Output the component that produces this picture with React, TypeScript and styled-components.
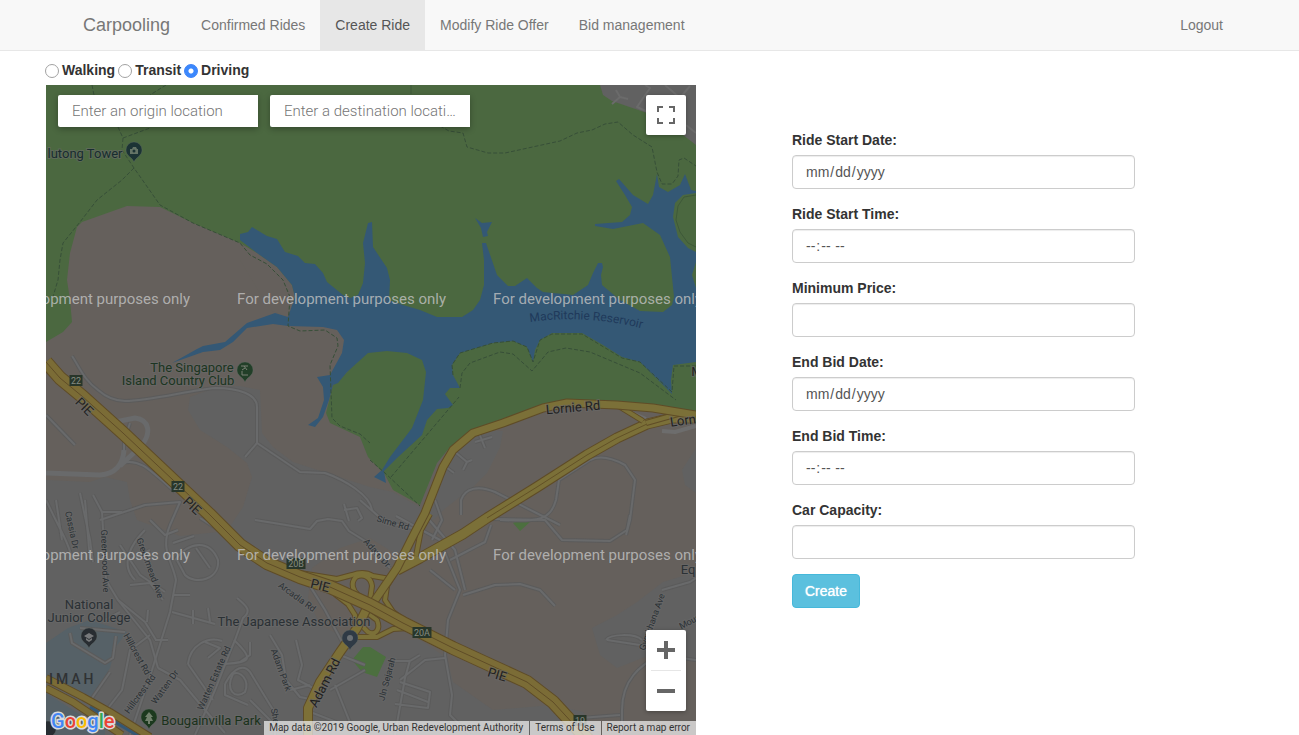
import React from "react";
import styled, { createGlobalStyle } from "styled-components";

const GlobalStyle = createGlobalStyle`
  *, *::before, *::after { box-sizing: border-box; }
  body {
    margin: 0;
    background: #fff;
    color: #333;
    font: 14px/20px "Liberation Sans", Arial, sans-serif;
  }
  input, button { font-family: inherit; }
`;

const Page = styled.div`
  min-height: 100vh;
  display: flex;
  flex-direction: column;
`;

const Navbar = styled.nav`
  padding-left: 7px;
  background: #f8f8f8;
  border-bottom: 1px solid #e7e7e7;
`;

const NavInner = styled.div`
  max-width: 1170px;
  margin: 0 auto;
  display: flex;
`;

const NavLink = styled.a<{ $active?: boolean }>`
  padding: 15px;
  color: ${(p) => (p.$active ? "#555" : "#777")};
  background: ${(p) => (p.$active ? "#e7e7e7" : "transparent")};
  text-decoration: none;
  white-space: nowrap;
`;

const Brand = styled(NavLink)`
  padding-right: 16px;
  font-size: 18px;
`;

const NavEnd = styled.div`
  display: flex;
  margin-left: auto;
`;

const ModeBar = styled.div`
  display: flex;
  align-items: center;
  gap: 3px;
  padding: 9px 0 5px 45px;
`;

const ModeLabel = styled.label`
  display: flex;
  align-items: center;
  gap: 3px;
  font-weight: 700;
`;

const Radio = styled.input`
  appearance: none;
  width: 14px;
  height: 14px;
  margin: 2px 0 0;
  border: 1px solid #a2a2a2;
  border-radius: 50%;
  background: #fff;
  &:checked {
    border-color: #3b82f7;
    background: radial-gradient(circle, #fff 0 2px, #3b88fd 3px);
  }
`;

const Main = styled.main`
  flex: 1;
  display: grid;
  grid-template-columns: 650fr 343fr;
  column-gap: 96px;
  padding: 0 164px 0 46px;
`;

const MapPanel = styled.section`
  position: relative;
  min-height: 650px;
  overflow: hidden;
  background: #616161;
`;

const MapSvg = styled.svg`
  position: absolute;
  inset: 0;
  width: 100%;
  height: 100%;
  font-family: Roboto, sans-serif;
`;

const SearchBar = styled.div`
  position: absolute;
  top: 10px;
  left: 12px;
  display: flex;
  gap: 12px;
`;

const SearchInput = styled.input`
  width: 200px;
  height: 32px;
  padding: 0 13px 0 14px;
  border: 0;
  border-radius: 2px 0 0 2px;
  box-shadow: 0 2px 6px rgba(0, 0, 0, 0.3);
  background: #fff;
  font: 300 15px Roboto, sans-serif;
  text-overflow: ellipsis;
  &::placeholder { color: #757575; opacity: 1; }
`;

const ControlCard = styled.div`
  position: absolute;
  right: 10px;
  display: flex;
  flex-direction: column;
  align-items: center;
  background: #fff;
  border-radius: 2px;
  box-shadow: 0 1px 4px rgba(0, 0, 0, 0.3);
`;

const TopControl = styled(ControlCard)`
  top: 10px;
`;

const ZoomControl = styled(ControlCard)`
  bottom: 24px;
`;

const ControlButton = styled.button`
  display: flex;
  align-items: center;
  justify-content: center;
  width: 40px;
  height: 40px;
  padding: 0;
  border: 0;
  background: none;
  color: #666;
`;

const ControlDivider = styled.div`
  width: 30px;
  height: 1px;
  background: #e6e6e6;
`;

const Attribution = styled.footer`
  position: absolute;
  right: 0;
  bottom: 0;
  display: flex;
  font: 10px/14px Roboto, sans-serif;
  color: #333;
`;

const Credit = styled.span`
  padding: 0 6px 0 5px;
  background: rgba(245, 245, 245, 0.7);
  white-space: nowrap;
  & + & { margin-left: 1px; }
  a { color: inherit; text-decoration: none; }
`;

const RideForm = styled.form`
  padding-top: 45px;
`;

const Field = styled.div`
  margin-bottom: 15px;
`;

const FieldLabel = styled.label`
  display: block;
  margin-bottom: 5px;
  font-weight: 700;
`;

const FieldInput = styled.input`
  display: block;
  width: 100%;
  height: 34px;
  padding: 6px 12px;
  border: 1px solid #ccc;
  border-radius: 4px;
  background: #fff;
  box-shadow: inset 0 1px 1px rgba(0, 0, 0, 0.075);
  color: #555;
  font-size: 14px;
  line-height: 20px;
  &::-webkit-calendar-picker-indicator { display: none; }
`;

const CreateButton = styled.button`
  padding: 6px 12px;
  border: 1px solid #46b8da;
  border-radius: 4px;
  background: #5bc0de;
  color: #fff;
  font-size: 14px;
  line-height: 20px;
  text-shadow: 0 0 1px #fff;
`;

const Watermark = styled.text`
  font-size: 15px;
  fill: #c3c3c3;
  fill-opacity: 0.8;
`;

const PlaceLabel = styled.text<{ $tone?: string; $size?: number }>`
  font-size: ${(p) => p.$size ?? 13}px;
  fill: ${(p) => p.$tone ?? "#2b3135"};
  stroke: #6a6a6a;
  stroke-opacity: 0.6;
  stroke-width: 2px;
  paint-order: stroke;
  text-anchor: middle;
`;

const Highway = ({ d, width = 7, color = "#7b6c36" }: { d: string; width?: number; color?: string }) => (
  <g fill="none" strokeLinejoin="round">
    <path d={d} stroke="#5f4c27" strokeWidth={width + 2} />
    <path d={d} stroke={color} strokeWidth={width} />
  </g>
);

const Shield = ({ x, y, text }: { x: number; y: number; text: string }) => {
  const w = text.length > 2 ? 19 : 13;
  return (
    <g>
      <rect x={x - w / 2} y={y - 6} width={w} height={11} fill="#28362a" />
      <text x={x} y={y + 3} fontSize="9" textAnchor="middle" fill="#858b80">{text}</text>
    </g>
  );
};

const Pin = ({ x, y, color, children }: { x: number; y: number; color: string; children?: React.ReactNode }) => (
  <g transform={`translate(${x} ${y})`}>
    <path d="M0 11 C-2 6 -8 5 -8 -1 A8 8 0 1 1 8 -1 C8 5 2 6 0 11Z" fill={color} stroke="#65706a" strokeOpacity=".35" />
    {children}
  </g>
);

const localRoads = [
  "M72 356C80 368 84 380 98 390C106 397 115 401 125 401C150 401 190 390 215 388C238 388 258 394 257 408L257 443L245 457",
  "M257 443L300 472L325 473C345 480 370 495 372 510",
  "M46 473L100 475C115 474 123 465 124 453L124 440M122 463C140 458 150 470 175 492",
  "M115 422L135 418C150 420 151 433 142 445L120 466M130 423L127 432C128 440 140 444 140 447",
  "M46 500C60 530 70 545 72 560M56 500L62 540M80 493L90 540L93 562",
  "M93 495L102 512L122 512M102 512L106 580L118 600L150 640L158 668M85 500L90 560",
  "M100 520L145 505L180 502L170 525C160 550 172 560 176 580L170 612L152 670L130 735",
  "M172 612L215 624M193 624V610M210 622L208 608M173 543L194 536M174 595L190 595",
  "M120 545L140 575L165 592M128 560L150 550M130 585L150 583L163 600",
  "M150 635L130 650L122 690L95 725M158 668L180 680L205 710L225 733",
  "M118 600L145 622L156 640M120 612L105 620M147 622L148 610M155 640L168 640",
  "M175 560C190 540 210 540 218 560C220 580 195 585 185 575L177 560M196 548L210 568",
  "M150 520L165 535L178 530M145 530C130 545 120 565 135 580",
  "M188 664C190 645 208 636 222 641M205 642L220 648L208 658M188 664L213 700",
  "M237 598C245 605 253 610 243 618L235 640L230 652L215 690L195 735",
  "M234 640C255 660 250 662 225 664M240 662L250 655V642",
  "M270 635L282 655L286 680L300 697L315 700M290 690L310 685",
  "M225 684C235 665 245 665 250 672L275 713V735M225 684V695L248 705",
  "M233 674C225 690 235 700 245 692C250 680 240 670 233 674",
  "M200 518L250 550L310 586L325 610L342 642",
  "M255 520L280 524L310 529L317 521L328 519L342 521L349 531L365 541L390 568M349 521L344 504M344 510L357 508L362 518L358 521M360 500L385 522L412 528",
  "M340 655L365 665M330 690L365 670M335 685L355 735M305 710L370 735",
  "M296 640L302 665L298 680L317 690M250 700L285 735",
  "M396 516L440 540L460 590L448 620L445 655L452 695L450 715L470 735",
  "M463 595L495 585L520 584L540 590L555 606",
  "M425 515L455 550L465 590M430 570L455 590",
  "M435 500L442 520L432 540M450 560L485 542L491 525M490 519L545 520L562 540L610 541L627 530L630 515",
  "M461 515V500C465 488 478 485 495 492L560 525M559 480L556 500C550 520 540 522 500 520",
  "M559 480L590 460C600 455 612 458 625 465L635 480L630 520L626 535",
  "M455 452L467 462L463 470M467 462L472 460M479 433L485 448M475 442L492 437M446 467L454 473",
  "M410 660L405 678L395 735M395 661H410L420 655M400 682L430 692L428 708L395 704M400 680L425 660L445 658M397 690L428 702",
  "M607 640L640 645M606 640C610 634 635 633 642 640M662 590L690 582L696 578",
  "M696 660L660 655C640 665 622 680 622 710V735M580 718L620 715",
  "M46 415L75 445M70 633L72 643L105 663L113 658L116 636M110 672L92 698M80 628L125 632",
];

const areaGray = [
  "M600 85L603 95L612 101L647 113L683 135L696 145V85Z",
  "M46 480L90 482L105 477L127 482L130 500L137 520L180 536L227 531L243 507L252 477L247 463L227 447L200 430L188 410L190 397L217 387L240 386L260 390L262 433L273 447L293 462L370 487L393 492L425 510L405 560L370 538L340 548L312 568L308 598L320 625L350 640L420 640L447 658L453 682L493 710L553 705L583 712L600 735H46Z",
  "M470 430L503 431L500 447L487 473L473 487L447 507L433 520L425 512L440 468L452 448Z",
  "M592 628L617 615L637 602L663 582L696 572V660L650 655L617 668L600 655Z",
  "M696 448L682 470L685 485L696 493Z",
];

const waterPath =
  "M252 227L267 236L277 239L285 252L298 256L305 263L315 264L323 273L327 282L343 295L350 298L358 295L363 283L365 263L363 243L368 223L372 222L373 247L387 268L390 280L389 300L403 305L420 310L437 317L462 317L473 310L480 300L484 285V260L482 243L486 243L497 275L508 286H515L527 278L537 288L543 292L573 295L588 285L593 273L598 263L602 263L603 267L601 275L602 285L620 300L640 311L663 312L672 305L674 297L670 257L660 235L643 223L613 229L595 226L595 224L622 222L630 215L632 207L625 195L616 181L619 179L633 195L648 204L653 195L657 174L659 187L668 192L680 185L685 174L691 190L696 191V193L683 195L675 203L673 217L678 237L688 248L696 252V262L692 275L696 288V362L673 365L671 380L672 394L640 362L622 357L603 345L582 333H552L540 340L535 350L533 362L527 347L513 341L493 343L460 353L452 365L453 375L460 388H450L445 394L453 405L448 408L437 409L427 420L422 435L397 458L384 471L386 483L374 477L382 470L390 457L412 428L423 400L426 372L422 360L407 353L387 351L368 353L347 372L338 383L333 385L329 400L323 417L315 427L308 425L318 418L324 400L323 387L317 377L330 375L342 353L344 340L337 330L323 327L288 326L273 324L247 328L233 342L220 350L203 352L172 363L197 349L203 346L225 342L247 323L275 313L288 317L295 297L292 285L277 267L257 253L240 240V234L248 232Z";

const trails =
  "M92 85L95 100M166 85L150 95L118 127M118 127L123 138L150 128M123 138L122 150L134 168L160 205L193 223L240 243L250 255L267 264L283 280L290 297L288 326L300 331L325 330L337 338L338 346L330 365L332 418L340 426L360 434L370 443M134 168L122 180L97 200L80 222L63 243L60 260L58 280L52 300M440 126L449 131L463 133L467 147L488 153L505 153L560 141L577 133L592 130L605 124L618 122L633 135L652 147L657 172L662 184L672 184L678 176L679 160L684 158L696 166M453 375L452 365L460 353L493 343L513 341L527 347L533 362L540 340L552 334L582 334L622 358L640 362L672 392L674 366L696 366M460 388L462 373L470 363L500 352L513 354L532 371L548 352L566 348L590 352L640 373L676 400M370 460L385 473L420 506M391 477L459 397";

const freeways =
  "M46 362L60 378L83 397L123 433L173 480L209 514L240 545L267 563L300 577L330 587L370 605L403 623L453 648L490 665L527 682L553 702L577 728L590 742";

const ReservoirMap = () => (
  <MapSvg viewBox="46 85 650 650" preserveAspectRatio="xMidYMid slice" role="img" aria-label="Map of MacRitchie Reservoir">
    <rect x="-600" y="-600" width="2000" height="2000" fill="#65605c" />
    {areaGray.map((d) => <path key={d} d={d} fill="#616161" />)}
    <path d="M46 85H600L603 95L612 101L647 113L683 135L696 145V330H500L300 310L240 243L193 223L160 207L127 206L82 222L77 227L70 253L67 280L70 300L72 322L63 332L46 342Z" fill="#4b6840" />
    <path d="M240 243L257 253L277 267L292 285L295 297L288 317L270 310L240 260Z" fill="#65605c" />
    <path d="M368 345L500 330L600 320L696 340V412L637 403L570 402L547 407L503 422L470 433L450 447L437 463L420 505L393 490L385 475L368 457L360 437L330 423L326 413L333 385L347 372Z" fill="#4b6840" />
    <path d="M46 643L68 628L90 620L127 632L115 648L110 668L92 698L46 676ZM46 693L105 730V735H46Z" fill="#566167" />
    <path d="M513 523L521 519L530 522L520 531ZM352 660L363 647H370L386 657L377 677L362 672Z" fill="#4c6f3f" />
    <path d={waterPath} fill="#345875" />
    <path d="M475 218L482 223L492 222L487 232L488 236L483 237L481 228Z" fill="#345875" />
    <path d={trails} fill="none" stroke="#374f38" strokeDasharray="4 2" />
    <path d="M696 195L684 197L678 206L676 220L680 232L688 243L696 247M411 85V94" fill="none" stroke="#3e5939" />

    <g fill="none" strokeLinejoin="round">
      {localRoads.map((d) => <path key={d} d={d} stroke="#5b5b5b" strokeWidth="4" />)}
      {localRoads.map((d) => <path key={d} d={d} stroke="#696a6b" strokeWidth="2" />)}
      <path d="M612 104L620 97L616 90M620 97L628 99M648 112L637 107L650 88L645 85M665 85L680 98L690 86M686 125L696 133" stroke="#6b6b6b" strokeWidth="2" />
      <path d="M46 473L100 475C115 474 123 465 124 450M115 422L135 418C150 420 151 433 142 445L120 466" stroke="#696a6b" strokeWidth="5" />
      <path d="M618 407L646 419M662 431L675 432L696 426" stroke="#6d6d6d" strokeWidth="4" />
    </g>

    <path d="M90 707L140 737" fill="none" stroke="#345875" strokeWidth="3" />
    <Highway d="M46 678L83 697L110 712L150 737" width={6} />
    <Highway d="M46 688L73 702L122 735" width={6} />
    <Highway d="M280 568L300 573L337 579L352 575C360 572 368 573 373 576L390 579M370 600L372 586C371 577 363 573 356 577C350 583 353 591 358 595L370 602" width={4} color="#7b7038" />
    <Highway d="M397 570L387 586L385 600L393 612L413 627M335 594L348 604L355 615V626M366 612L377 620C381 630 375 636 368 632L360 624M352 637H377L393 629L408 628" width={4} color="#7b7038" />
    <Highway d="M366 610L357 628L340 652L320 682L308 708V740" width={8} color="#7d7037" />
    <Highway d="M696 418L672 418L647 424L617 438L587 455L537 487L487 518L463 534L420 558L397 570" width={9} color="#7b7038" />
    <Highway d="M430 514L421 530L416 556M617 405L643 421M646 423L678 414H696" width={4} color="#7b7038" />
    <Highway d="M373 603L397 568L411 540L425 513L443 467L453 450L473 433L503 423L543 408L567 403L617 405L653 408L696 415" width={7} color="#7b7038" />
    <Highway d={freeways} width={12} />
    <path d={freeways} fill="none" stroke="#5f4c27" />
    <path d="M487 518L537 487L587 455L617 438L647 424" fill="none" stroke="#625126" />

    <Shield x={76} y={381} text="22" />
    <Shield x={178} y={487} text="22" />
    <Shield x={296} y={564} text="20B" />
    <Shield x={422} y={633} text="20A" />
    <Shield x={580} y={721} text="19" />

    <Pin x={134} y={151} color="#1c3334">
      <path d="M-4 -2H-2L-1 -4H2L3 -2H4V3H-4Z" fill="#657466" />
      <circle cy="0" r="1.5" fill="#1c3334" />
    </Pin>
    <Pin x={245} y={371} color="#223f28">
      <path d="M-4 -5H3M-1 -5L2 -1M-3 -1L0 -3M-3 0V4H3" fill="none" stroke="#7a8175" />
    </Pin>
    <Pin x={89} y={637} color="#282d32">
      <path d="M-5 -1L0 -4L5 -1L0 2ZM-3 1V3L0 5L3 3V1L0 3Z" fill="#77797b" />
    </Pin>
    <Pin x={350} y={639} color="#2f3a45"><circle cy="-1" r="3" fill="#6a6f73" /></Pin>
    <Pin x={149} y={718} color="#1c391e">
      <path d="M0 -6L4 -1H2L4 3H1V6H-1V3H-4L-2 -1H-4Z" fill="#71806c" />
    </Pin>
    <Pin x={48} y={730} color="#282d32" />

    <PlaceLabel x={85} y={158} $tone="#182d2f">lutong Tower</PlaceLabel>
    <PlaceLabel x={192} y={372} $tone="#1c3521">The Singapore</PlaceLabel>
    <PlaceLabel x={178} y={385} $tone="#1c3521">Island Country Club</PlaceLabel>
    <PlaceLabel x={89} y={609}>National</PlaceLabel>
    <PlaceLabel x={89} y={622}>Junior College</PlaceLabel>
    <PlaceLabel x={294} y={626}>The Japanese Association</PlaceLabel>
    <PlaceLabel x={211} y={725} $tone="#1b321c">Bougainvilla Park</PlaceLabel>
    <text x="49" y="684" fontSize="14" fontWeight="500" letterSpacing="3" fill="#303234">IMAH</text>
    <PlaceLabel x={688} y={574}>Eq</PlaceLabel>
    <PlaceLabel x={697} y={376} $tone="#222">M</PlaceLabel>
    <PlaceLabel transform="translate(84 407) rotate(45)" y={4} $tone="#222">PIE</PlaceLabel>
    <PlaceLabel transform="translate(192 506) rotate(43)" y={4} $tone="#222">PIE</PlaceLabel>
    <PlaceLabel transform="translate(320 586) rotate(14)" y={4} $tone="#222">PIE</PlaceLabel>
    <PlaceLabel transform="translate(497 675) rotate(17)" y={4} $tone="#222">PIE</PlaceLabel>
    <PlaceLabel transform="translate(573 408) rotate(-5)" y={4} $tone="#1f1f1f">Lornie Rd</PlaceLabel>
    <PlaceLabel transform="translate(683 421) rotate(-8)" y={4} $tone="#1f1f1f">Lorn</PlaceLabel>
    <PlaceLabel transform="translate(325 683) rotate(-63)" y={4} $tone="#1f1f1f">Adam Rd</PlaceLabel>
    <PlaceLabel transform="translate(393 523) rotate(16)" y={3} $size={9}>Sime Rd</PlaceLabel>
    <PlaceLabel transform="translate(377 553) rotate(48)" y={3} $size={9}>Adam Dr</PlaceLabel>
    <PlaceLabel transform="translate(297 597) rotate(36)" y={3} $size={9}>Arcadia Rd</PlaceLabel>
    <PlaceLabel transform="translate(72 530) rotate(78)" y={3} $size={9}>Cassia Dr</PlaceLabel>
    <PlaceLabel transform="translate(105 561) rotate(88)" y={3} $size={9}>Greenwood Ave</PlaceLabel>
    <PlaceLabel transform="translate(150 568) rotate(70)" y={3} $size={9}>Greenmead Ave</PlaceLabel>
    <PlaceLabel transform="translate(137 654) rotate(61)" y={3} $size={9}>Hillcrest Rd</PlaceLabel>
    <PlaceLabel transform="translate(140 694) rotate(-54)" y={3} $size={9}>Hillcrest Rd</PlaceLabel>
    <PlaceLabel transform="translate(165 687) rotate(-54)" y={3} $size={9}>Watten Dr</PlaceLabel>
    <PlaceLabel transform="translate(214 678) rotate(-66)" y={3} $size={9}>Watten Estate Rd</PlaceLabel>
    <PlaceLabel transform="translate(281 670) rotate(70)" y={3} $size={9}>Adam Park</PlaceLabel>
    <PlaceLabel transform="translate(387 679) rotate(-75)" y={3} $size={9}>Jln Sejarah</PlaceLabel>
    <PlaceLabel transform="translate(652 622) rotate(-70)" y={3} $size={9}>Gymkhana Ave</PlaceLabel>
    <PlaceLabel transform="translate(689 622) rotate(-28)" y={3} $size={9}>Mour</PlaceLabel>
    <PlaceLabel transform="translate(275 716) rotate(80)" y={3} $size={9}>She</PlaceLabel>
    <path id="reservoir-curve" d="M530 322Q586 314 644 329" fill="none" />
    <text fontSize="12" fill="#203a5b"><textPath href="#reservoir-curve">MacRitchie Reservoir</textPath></text>

    {[304, 560].map((y) =>
      [-19, 237, 493].map((x) => <Watermark key={`${x}-${y}`} x={x} y={y}>For development purposes only</Watermark>)
    )}

    <text x="51" y="728" fontSize="20" fontWeight="500" stroke="#d9dbdc" strokeWidth="3" paintOrder="stroke" strokeLinejoin="round">
      <tspan fill="#4285f4">G</tspan><tspan fill="#ea4335">o</tspan><tspan fill="#fbbc05">o</tspan><tspan fill="#4285f4">g</tspan><tspan fill="#34a853">l</tspan><tspan fill="#ea4335">e</tspan>
    </text>
  </MapSvg>
);

const modes = ["Walking", "Transit", "Driving"];

const fields = [
  { id: "start-date", label: "Ride Start Date:", type: "date" },
  { id: "start-time", label: "Ride Start Time:", type: "time" },
  { id: "min-price", label: "Minimum Price:", type: "text" },
  { id: "bid-date", label: "End Bid Date:", type: "date" },
  { id: "bid-time", label: "End Bid Time:", type: "time" },
  { id: "capacity", label: "Car Capacity:", type: "text" },
];

export default function App() {
  return (
    <Page>
      <GlobalStyle />
      <Navbar>
        <NavInner>
          <Brand href="#">Carpooling</Brand>
          <NavLink href="#">Confirmed Rides</NavLink>
          <NavLink href="#" $active aria-current="page">Create Ride</NavLink>
          <NavLink href="#">Modify Ride Offer</NavLink>
          <NavLink href="#">Bid management</NavLink>
          <NavEnd><NavLink href="#">Logout</NavLink></NavEnd>
        </NavInner>
      </Navbar>

      <ModeBar role="radiogroup" aria-label="Travel mode">
        {modes.map((mode) => (
          <ModeLabel key={mode}>
            <Radio type="radio" name="mode" value={mode} defaultChecked={mode === "Driving"} />
            {mode}
          </ModeLabel>
        ))}
      </ModeBar>

      <Main>
        <MapPanel>
          <ReservoirMap />
          <SearchBar>
            <SearchInput type="text" placeholder="Enter an origin location" aria-label="Origin" />
            <SearchInput type="text" placeholder="Enter a destination location" aria-label="Destination" />
          </SearchBar>
          <TopControl>
            <ControlButton type="button" aria-label="Toggle fullscreen view">
              <svg width="18" height="18" viewBox="0 0 18 18" fill="currentColor">
                <path d="M0 0V6H2V2H6V0ZM12 0V2H16V6H18V0ZM0 12V18H6V16H2V12ZM16 12V16H12V18H18V12Z" />
              </svg>
            </ControlButton>
          </TopControl>
          <ZoomControl>
            <ControlButton type="button" aria-label="Zoom in">
              <svg width="18" height="18" viewBox="0 0 18 18" fill="currentColor">
                <path d="M7 0H11V7H18V11H11V18H7V11H0V7H7Z" />
              </svg>
            </ControlButton>
            <ControlDivider />
            <ControlButton type="button" aria-label="Zoom out">
              <svg width="18" height="18" viewBox="0 0 18 18" fill="currentColor">
                <path d="M0 7H18V11H0Z" />
              </svg>
            </ControlButton>
          </ZoomControl>
          <Attribution>
            <Credit>Map data ©2019 Google, Urban Redevelopment Authority</Credit>
            <Credit><a href="#">Terms of Use</a></Credit>
            <Credit><a href="#">Report a map error</a></Credit>
          </Attribution>
        </MapPanel>

        <RideForm>
          {fields.map((f) => (
            <Field key={f.id}>
              <FieldLabel htmlFor={f.id}>{f.label}</FieldLabel>
              <FieldInput id={f.id} type={f.type} />
            </Field>
          ))}
          <CreateButton type="submit">Create</CreateButton>
        </RideForm>
      </Main>
    </Page>
  );
}
